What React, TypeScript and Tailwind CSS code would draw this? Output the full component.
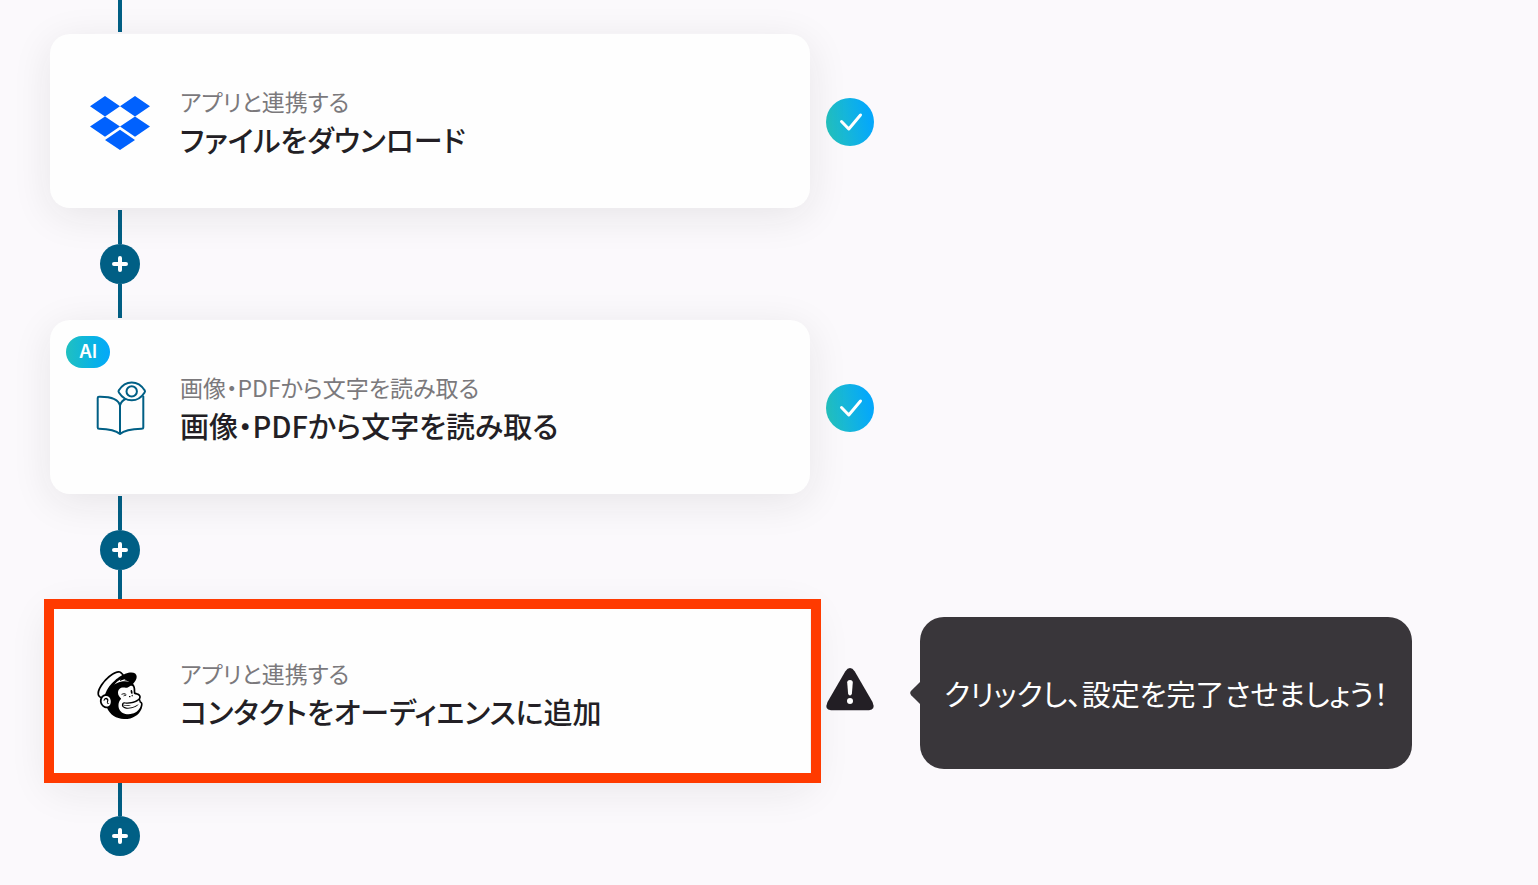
import type { ReactNode } from "react";
import { SiMailchimp } from "react-icons/si";

function DropboxLogo() {
  return (
    <svg viewBox="0 0 60 54" className="w-[60px]" fill="#0061fe" aria-hidden="true">
      <path d="M15 0 30 10.2 15 20.4 0 10.2ZM45 0 60 10.2 45 20.4 30 10.2ZM15 20.4 30 30.6 15 40.8 0 30.6ZM45 20.4 60 30.6 45 40.8 30 30.6ZM30 33.8 45 44 30 54 15 44Z" />
    </svg>
  );
}

function ReadingIcon() {
  return (
    <svg
      viewBox="0 2 60 60"
      className="w-[60px]"
      fill="none"
      stroke="#005f85"
      strokeWidth="2"
      strokeLinecap="round"
      strokeLinejoin="round"
      aria-hidden="true"
    >
      <path d="M30 57C26 53.400 20 52 9 51.800 8 51.800 7.700 51.300 7.700 50.500V21Q7.700 19.700 9 19.700C20 19.500 28.500 22 30 28.500V57C34 53.400 41 52 51.500 51.800 52.800 51.800 53.300 51.300 53.300 50.300V19.500" />
      <path d="M30 28.500C31 25 32.500 23.200 35.500 22" />
      <path d="M28.900 15.500Q28.100 14.300 28.900 13.200C35.500 2.800 48 2.800 54.600 13.200Q55.400 14.300 54.600 15.500C48 25.900 35.500 25.900 28.900 15.500Z" />
      <circle cx="41.700" cy="14.400" r="5.200" />
    </svg>
  );
}

function StatusDone() {
  return (
    <svg viewBox="0 0 48 48" className="size-12" role="img" aria-label="完了">
      <defs>
        <linearGradient id="done" x1="0" y1="0.600" x2="1" y2="0.400">
          <stop offset="0" stopColor="#24c2bd" />
          <stop offset="0.900" stopColor="#05a8fa" />
        </linearGradient>
      </defs>
      <circle cx="24" cy="24" r="24" fill="url(#done)" />
      <path d="M15.500 23.500 22.800 31 34.500 17" fill="none" stroke="#fff" strokeWidth="3" strokeLinecap="round" strokeLinejoin="round" />
    </svg>
  );
}

function StatusWarning() {
  return (
    <svg viewBox="0 0 48 48" className="size-12 overflow-visible" role="img" aria-label="未設定">
      <path d="M19.200 1.400Q24-5.200 28.800 1.400L46.500 32Q49.800 40 43 40.200H5Q-1.800 40 1.500 32Z" fill="#231f25" />
      <path d="M21.200 12.500Q21.200 10 24 10T26.800 12.500L25.900 23.500Q25.500 25.400 24 25.400T22.100 23.500Z" fill="#fff" />
      <circle cx="24" cy="31" r="3" fill="#fff" />
    </svg>
  );
}

function AddStepButton() {
  return (
    <button type="button" aria-label="ステップを追加" className="flex size-10 items-center justify-center rounded-full bg-[#005f85]">
      <svg viewBox="0 0 16 16" className="size-4" stroke="#fff" strokeWidth="4" strokeLinecap="round" aria-hidden="true">
        <path d="M8 2v12M2 8h12" />
      </svg>
    </button>
  );
}

function Connector() {
  return (
    <div className="ml-[50px] flex h-28 w-10 flex-col items-center py-0.5">
      <div className="w-1 flex-1 bg-[#005f85]" />
      <AddStepButton />
      <div className="w-1 flex-1 bg-[#005f85]" />
    </div>
  );
}

type StepProps = {
  icon: ReactNode;
  label: string;
  title: string;
  ai?: boolean;
  selected?: boolean;
  status: ReactNode;
  children?: ReactNode;
};

function Step({ icon, label, title, ai, selected, status, children }: StepProps) {
  return (
    <li className="flex items-center gap-4">
      <button
        type="button"
        className={
          "relative flex h-[174px] w-full max-w-[760px] items-center gap-[30px] bg-[#fefefe] px-10 pt-1 text-left shadow-[0_8px_40px_rgba(35,31,37,0.09)] " +
          (selected ? "" : "rounded-[20px]")
        }
      >
        <span className="flex size-[60px] shrink-0 items-center justify-center">{icon}</span>
        <span className="flex flex-col">
          <span className="text-[23px] leading-8 text-[#7b797c]">{label}</span>
          <span className="text-[29px] leading-11 font-medium text-[#231f25]">{title}</span>
        </span>
        {ai && (
          <span className="absolute top-4 left-4 flex h-8 w-11 items-center justify-center rounded-full bg-linear-to-r from-[#20c0c0] to-[#05a8fa] font-[Inter] text-lg font-semibold text-white">
            AI
          </span>
        )}
        {selected && <span className="absolute -top-[7px] -right-[11px] -bottom-[3px] -left-[6px] border-10 border-[#ff3a00]" />}
      </button>
      <div className="shrink-0 pt-0.5">{status}</div>
      {children}
    </li>
  );
}

export default function App() {
  return (
    <main className="min-h-screen bg-[#fbf9fc] px-[50px] font-['Noto_Sans_CJK_JP',sans-serif] [font-feature-settings:'palt']">
      <div className="ml-[68px] h-8 w-1 bg-[#005f85]" />
      <ol className="pt-0.5">
        <Step icon={<DropboxLogo />} label="アプリと連携する" title="ファイルをダウンロード" status={<StatusDone />} />
        <li><Connector /></li>
        <Step
          icon={<ReadingIcon />}
          label="画像・PDFから文字を読み取る"
          title="画像・PDFから文字を読み取る"
          status={<StatusDone />}
          ai
        />
        <li><Connector /></li>
        <Step
          icon={<SiMailchimp className="size-12 text-black" />}
          label="アプリと連携する"
          title="コンタクトをオーディエンスに追加"
          status={<StatusWarning />}
          selected
        >
          <div role="tooltip" className="ml-5 flex items-center">
            <svg viewBox="0 0 10 24" className="h-6 w-[10px]" fill="#39363a" aria-hidden="true">
              <path d="M10 1 1.200 9.800Q-0.800 12 1.200 14.200L10 23Z" />
            </svg>
            <p className="rounded-3xl bg-[#39363a] px-6 py-14 text-[29px] leading-10 whitespace-nowrap text-white">
              クリックし、設定を完了させましょう！
            </p>
          </div>
        </Step>
      </ol>
      <div className="ml-[50px] flex w-10 flex-col items-center pt-0.5">
        <div className="h-[34px] w-1 bg-[#005f85]" />
        <AddStepButton />
      </div>
    </main>
  );
}
